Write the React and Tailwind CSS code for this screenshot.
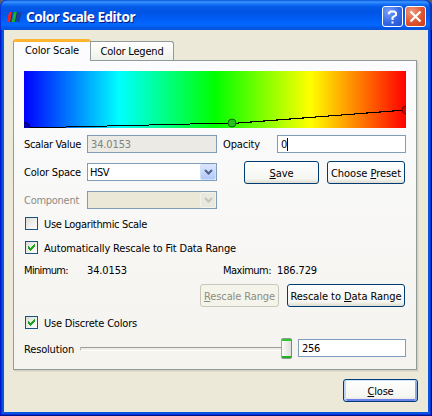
import { useLayoutEffect, useRef } from "react";

// Text run tracked so that it spans `w` pixels.
function Label({ w, className = "", children }) {
  const ref = useRef(null);
  useLayoutEffect(() => {
    const el = ref.current;
    el.style.letterSpacing = "0px";
    const natural = el.getBoundingClientRect().width;
    el.style.letterSpacing = `${(w - natural) / el.textContent.length}px`;
  }, [w]);
  return (
    <span ref={ref} className={`inline-block shrink-0 whitespace-pre pt-[2px] leading-[14px] ${className}`}>
      {children}
    </span>
  );
}

function Cell({ className = "", children }) {
  return <div className={`flex shrink-0 items-center ${className}`}>{children}</div>;
}

function Button({ className = "", w, disabled, children }) {
  const look = disabled
    ? "border-[#c9c7ba] bg-[#f5f4ea] text-[#8d8c80]"
    : "border-[#003c74] bg-linear-to-b from-white via-[#f5f5f1] via-80% to-[#dfdccf] text-black";
  return (
    <button className={`flex h-[23px] shrink-0 items-center justify-center rounded-[3px] border pt-px ${look} ${className}`}>
      <Label w={w}>{children}</Label>
    </button>
  );
}

const U = ({ children }) => <span className="underline decoration-1 underline-offset-1">{children}</span>;

function Check({ checked, w, children }) {
  return (
    <label className="flex h-[13px] items-center pl-[11px]">
      <span className="flex size-[13px] items-center justify-center border border-[#1c5180] bg-linear-to-br from-[#dcdcd7] to-white">
        {checked && (
          <svg width="7" height="7" viewBox="0 0 7 7" shapeRendering="crispEdges" fill="#21a121">
            <path d="M0 2h1v1h1v1h1v-1h1v-1h1v-1h1v-1h1v3h-1v1h-1v1h-1v1h-1v1h-1v-1h-1v-1h-1z" />
          </svg>
        )}
      </span>
      <Label w={w} className="ml-[6px]">{children}</Label>
    </label>
  );
}

function Combo({ disabled, children }) {
  return (
    <div className={`flex h-[18px] w-[130px] shrink-0 items-center justify-between border border-[#7f9db9] pl-[2px] ${disabled ? "bg-[#ebe8d8]" : "bg-white"}`}>
      <span className="flex">{children}</span>
      <span className={`flex h-4 w-[16px] items-center justify-center rounded-[2px] border ${disabled ? "border-[#f4f3ec] bg-[#e9e8df]" : "border-[#d3defb] bg-linear-to-b from-[#dce6ff] to-[#b2c8f8]"}`}>
        <svg width="9" height="6" viewBox="0 0 9 6">
          <path d="M1 1l3.5 3.5L8 1" fill="none" stroke={disabled ? "#c5c4b7" : "#4d6185"} strokeWidth="2" />
        </svg>
      </span>
    </div>
  );
}

const field = "flex h-[18px] shrink-0 items-center border border-[#7f9db9] bg-white pl-[3px]";

export default function App() {
  return (
    <div className="h-[416px] w-[432px] overflow-hidden bg-[#5a5f68] font-['DejaVu_Sans_Condensed','DejaVu_Sans',sans-serif] text-[11px] text-black [font-stretch:condensed]">
      <div className="flex h-full flex-col rounded-t-[7px] bg-[#0831d9] shadow-[inset_-1px_-1px_0_#00138c,inset_1px_0_0_#0019cf]">
        <header className="flex h-[30px] shrink-0 items-center rounded-t-[7px] bg-[linear-gradient(180deg,#0753d8_0,#3c96ff_2px,#1672f5_4px,#0359e7_7px,#0054e3_12px,#005df5_19px,#0268ff_25px,#005bee_27px,#0144cf_30px)] pl-[6px] pr-[6px] pt-[3px] shadow-[inset_1px_0_0_#0831d9,inset_-2px_0_0_#0a36bd]">
          <svg width="16" height="12" viewBox="0 0 16 12">
            <path d="M5.5 1l-2 10h1.5l2-10zM10.5 1l-2 10h1.5l2-10z" fill="#17306f" />
            <path d="M3 1h3l-2 10h-3z" fill="#f3221c" />
            <path d="M7.8 1h3l-2 10h-3z" fill="#10b52c" />
            <path d="M12.5 1h3l-2 10h-3z" fill="#1b3f96" />
          </svg>
          <Label w={109} className="ml-1 pb-[2px] font-['Noto_Sans',sans-serif] text-[13.5px] font-bold text-white [font-stretch:normal] [text-shadow:1px_1px_0_#0a1883]">Color Scale Editor</Label>
          <div className="ml-auto flex gap-[2px]">
            <button className="flex size-[21px] items-center justify-center rounded-[3px] border border-white bg-[radial-gradient(circle_at_30%_25%,#7aa1f5,#3569e8_55%,#2050cf)]">
              <svg width="11" height="14" viewBox="0 0 11 14" fill="none" stroke="white" strokeWidth="2">
                <path d="M2 4.2V3L3.5 1.5h4L9 3v2L5.5 7.5V10M5.5 11.5v2" />
              </svg>
            </button>
            <button className="flex size-[21px] items-center justify-center rounded-[3px] border border-white bg-[radial-gradient(circle_at_30%_25%,#f09a80,#df5431_55%,#c83c12)]">
              <svg width="13" height="13" viewBox="0 0 13 13" fill="none" stroke="white" strokeWidth="2.2">
                <path d="M1.5 1.5l10 10M11.5 1.5l-10 10" />
              </svg>
            </button>
          </div>
        </header>

        <main className="mx-1 mb-1 flex grow flex-col bg-[#ece9d8] pl-[9px] pt-[9px] shadow-[0_0_0_2px_#0855dd]">
          <div className="z-10 flex h-[22px] items-end">
            <div className="flex h-[22px] w-[78px] justify-center rounded-t-[3px] border-x border-t-[3px] border-x-[#919b9c] border-t-[#ffb62e] bg-[#fcfcfe]">
              <Label w={54}>Color Scale</Label>
            </div>
            <div className="mb-px flex h-[19px] w-[83px] justify-center rounded-tr-[3px] border-r border-t border-[#919b9c] bg-linear-to-b from-white to-[#f0f0ea] pt-px">
              <Label w={63}>Color Legend</Label>
            </div>
          </div>

          <section className="-mt-px flex h-[310px] w-[404px] flex-col border border-[#919b9c] bg-linear-to-b from-[#fcfcfe] to-[#f4f3ee] pt-[10px] shadow-[1px_1px_0_#d3d0c0,2px_2px_0_#e0ddcd]">
            <svg className="ml-[10px] block shrink-0" width="382" height="57" viewBox="0 0 382 57">
              <defs>
                <linearGradient id="hue">
                  <stop offset="0" stopColor="#00f" />
                  <stop offset=".25" stopColor="#0ff" />
                  <stop offset=".5" stopColor="#0f0" />
                  <stop offset=".75" stopColor="#ff0" />
                  <stop offset="1" stopColor="#f00" />
                </linearGradient>
              </defs>
              <rect width="382" height="57" fill="url(#hue)" />
              <path d="M0 56.5h42M42 55.5h41M83 54.5h42M125 53.5h41M166 52.5h42" stroke="#000" />
              <path d="M208 52.5L382 39" stroke="#000" strokeWidth="1.1" shapeRendering="crispEdges" />
              <circle cx="1" cy="56" r="4.5" fill="#0000a8" stroke="#000058" />
              <circle cx="208" cy="52" r="4" fill="#25c020" stroke="#0b6500" />
              <circle cx="382" cy="39" r="4" fill="#d00" stroke="#700" />
            </svg>

            <div className="mt-[7px] flex h-[18px] items-center pl-[10px]">
              <Cell className="w-[63px]"><Label w={57}>Scalar Value</Label></Cell>
              <Cell className="h-[18px] w-[130px] border border-[#7f9db9] bg-[#ebeae4] pl-[3px] text-[#84837a]"><Label w={40}>34.0153</Label></Cell>
              <Cell className="ml-[6px] w-[54px]"><Label w={37}>Opacity</Label></Cell>
              <div className={`${field} w-[129px]`}>
                <Label w={6}>0</Label>
                <span className="h-[13px] w-px bg-black" />
              </div>
            </div>

            <div className="mt-[8px] flex h-[23px] pl-[10px]">
              <Cell className="h-[22px] w-[63px]"><Label w={57}>Color Space</Label></Cell>
              <div className="pt-[2px]"><Combo><Label w={19}>HSV</Label></Combo></div>
              <Button w={24} className="ml-[27px] w-[75px]"><U>S</U>ave</Button>
              <Button w={70} className="ml-[8px] w-[78px]">Choose <U>P</U>reset</Button>
            </div>

            <div className="mt-[7px] mb-[8px] flex h-[18px] items-center pl-[10px]">
              <Cell className="w-[63px] text-[#8d8c84]"><Label w={55}>Component</Label></Cell>
              <Combo disabled />
            </div>

            <Check w={103}>Use Logarithmic Scale</Check>
            <div className="h-[11px]" />
            <Check checked w={192}>Automatically Rescale to Fit Data Range</Check>

            <div className="mt-[9px] flex h-[14px] items-center pl-[10px]">
              <Cell className="w-[63px]"><Label w={44}>Minimum:</Label></Cell>
              <Cell className="w-[136px]"><Label w={40}>34.0153</Label></Cell>
              <Cell className="w-[54px]"><Label w={48}>Maximum:</Label></Cell>
              <Label w={40}>186.729</Label>
            </div>

            <div className="mt-[7px] mb-[9px] flex h-[23px] gap-[8px] pl-[186px]">
              <Button disabled w={71} className="w-[79px]"><U>R</U>escale Range</Button>
              <Button w={111} className="w-[118px]">Rescale to <U>D</U>ata Range</Button>
            </div>

            <Check checked w={93}>Use Discrete Colors</Check>

            <div className="mt-[9px] flex h-[21px] items-center pl-[10px]">
              <Cell className="w-[56px]"><Label w={50}>Resolution</Label></Cell>
              <div className="h-[4px] w-[201px] rounded-l-[1px] border border-r-0 border-t-[#9d9c99] border-l-[#b5b4ad] border-b-white bg-[#f0efe7]" />
              <div className="flex h-[21px] w-[11px] flex-col justify-between rounded-[2px] border border-l-[#9aa6ab] border-r-[#778892] border-y-[#8a9a97] bg-linear-to-r from-[#fbfbf9] to-[#dfe0dc]">
                <span className="h-[2px] bg-[#2fc52f]" />
                <span className="h-[2px] bg-[#21b121]" />
              </div>
              <div className={`${field} -mt-[1px] ml-[6px] w-[108px]`}><Label w={18}>256</Label></div>
            </div>
          </section>

          <Button w={26} className="ml-[330px] mt-[9px] w-[75px] shadow-[inset_0_1px_0_#cee7ff,inset_2px_0_0_#bcd4f6,inset_-2px_0_0_#89ade4,inset_0_-2px_0_#6982ee]"><U>C</U>lose</Button>
        </main>
      </div>
    </div>
  );
}
